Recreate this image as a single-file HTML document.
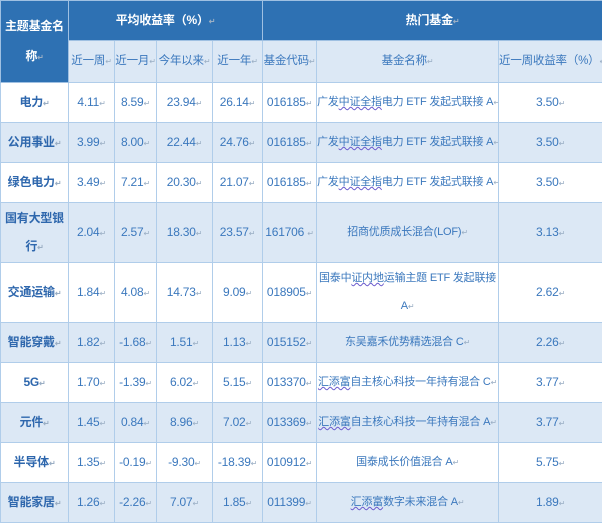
<!DOCTYPE html>
<html><head><meta charset="utf-8"><style>
body{margin:0;background:#fff;}
table{border-collapse:collapse;table-layout:fixed;width:602px;font-family:"Liberation Sans","Noto Sans CJK SC",sans-serif;font-size:12px;color:#3b78bd;}
td{border:1px solid #b0cdea;text-align:center;padding:0;overflow:hidden;line-height:28px;white-space:nowrap;letter-spacing:-0.2px;}
td.f{font-size:11px;}
.h{background:#2e71b3;color:#fff;font-weight:bold;border-color:#9fc0e2;}
.h2{background:#dce8f5;}
.h2 td{font-size:11.5px;}
.b{background:#dce8f5;}
.n{font-weight:bold;color:#2e67ad;}
i{font-style:normal;color:#9aaec4;font-size:8px;}
u{text-decoration:underline wavy #6a5acd;text-decoration-thickness:1px;}
</style></head><body>
<table>
<colgroup><col style="width:68px"><col style="width:46px"><col style="width:42px"><col style="width:56px"><col style="width:50px"><col style="width:54px"><col style="width:182px"><col style="width:104px"></colgroup>
<tr style="height:40px"><td class="h" rowspan="2" style="line-height:30px">主题基金名<br>称<i>↵</i></td><td class="h" colspan="4">平均收益率（%）<i>↵</i></td><td class="h" colspan="3">热门基金<i>↵</i></td></tr>
<tr style="height:42px" class="h2"><td>近一周<i>↵</i></td><td>近一月<i>↵</i></td><td>今年以来<i>↵</i></td><td>近一年<i>↵</i></td><td>基金代码<i>↵</i></td><td>基金名称<i>↵</i></td><td>近一周收益率（%）<i>↵</i></td></tr>
<tr style="height:40px"><td class="n">电力<i>↵</i></td><td>4.11<i>↵</i></td><td>8.59<i>↵</i></td><td>23.94<i>↵</i></td><td>26.14<i>↵</i></td><td>016185<i>↵</i></td><td class="f">广发<u>中证全指</u>电力 ETF 发起式联接 A<i>↵</i></td><td>3.50<i>↵</i></td></tr>
<tr style="height:40px" class="b"><td class="n">公用事业<i>↵</i></td><td>3.99<i>↵</i></td><td>8.00<i>↵</i></td><td>22.44<i>↵</i></td><td>24.76<i>↵</i></td><td>016185<i>↵</i></td><td class="f">广发<u>中证全指</u>电力 ETF 发起式联接 A<i>↵</i></td><td>3.50<i>↵</i></td></tr>
<tr style="height:40px"><td class="n">绿色电力<i>↵</i></td><td>3.49<i>↵</i></td><td>7.21<i>↵</i></td><td>20.30<i>↵</i></td><td>21.07<i>↵</i></td><td>016185<i>↵</i></td><td class="f">广发<u>中证全指</u>电力 ETF 发起式联接 A<i>↵</i></td><td>3.50<i>↵</i></td></tr>
<tr style="height:60px" class="b"><td class="n">国有大型银<br>行<i>↵</i></td><td>2.04<i>↵</i></td><td>2.57<i>↵</i></td><td>18.30<i>↵</i></td><td>23.57<i>↵</i></td><td>161706 <i>↵</i></td><td class="f">招商优质成长混合(LOF)<i>↵</i></td><td>3.13<i>↵</i></td></tr>
<tr style="height:60px"><td class="n">交通运输<i>↵</i></td><td>1.84<i>↵</i></td><td>4.08<i>↵</i></td><td>14.73<i>↵</i></td><td>9.09<i>↵</i></td><td>018905<i>↵</i></td><td class="f">国泰中<u>证内地</u>运输主题 ETF 发起联接<br>A<i>↵</i></td><td>2.62<i>↵</i></td></tr>
<tr style="height:40px" class="b"><td class="n">智能穿戴<i>↵</i></td><td>1.82<i>↵</i></td><td>-1.68<i>↵</i></td><td>1.51<i>↵</i></td><td>1.13<i>↵</i></td><td>015152<i>↵</i></td><td class="f">东吴嘉禾优势精选混合 C<i>↵</i></td><td>2.26<i>↵</i></td></tr>
<tr style="height:40px"><td class="n">5G<i>↵</i></td><td>1.70<i>↵</i></td><td>-1.39<i>↵</i></td><td>6.02<i>↵</i></td><td>5.15<i>↵</i></td><td>013370<i>↵</i></td><td class="f"><u>汇添富</u>自主核心科技一年持有混合 C<i>↵</i></td><td>3.77<i>↵</i></td></tr>
<tr style="height:40px" class="b"><td class="n">元件<i>↵</i></td><td>1.45<i>↵</i></td><td>0.84<i>↵</i></td><td>8.96<i>↵</i></td><td>7.02<i>↵</i></td><td>013369<i>↵</i></td><td class="f"><u>汇添富</u>自主核心科技一年持有混合 A<i>↵</i></td><td>3.77<i>↵</i></td></tr>
<tr style="height:40px"><td class="n">半导体<i>↵</i></td><td>1.35<i>↵</i></td><td>-0.19<i>↵</i></td><td>-9.30<i>↵</i></td><td>-18.39<i>↵</i></td><td>010912<i>↵</i></td><td class="f">国泰成长价值混合 A<i>↵</i></td><td>5.75<i>↵</i></td></tr>
<tr style="height:40px" class="b"><td class="n">智能家居<i>↵</i></td><td>1.26<i>↵</i></td><td>-2.26<i>↵</i></td><td>7.07<i>↵</i></td><td>1.85<i>↵</i></td><td>011399<i>↵</i></td><td class="f"><u>汇添富</u>数字未来混合 A<i>↵</i></td><td>1.89<i>↵</i></td></tr>
</table>
</body></html>
